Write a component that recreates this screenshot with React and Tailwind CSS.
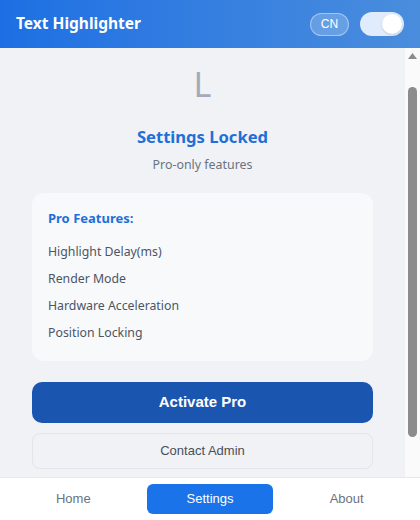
import React from "react";

export default function App() {
  const items = ["Highlight Delay(ms)", "Render Mode", "Hardware Acceleration", "Position Locking"];
  return (
    <div className="relative flex h-[520px] w-[420px] flex-col overflow-hidden bg-[#f0f2f6]" style={{ fontFamily: '"Noto Sans", "Open Sans", sans-serif' }}>
      <header className="flex h-12 shrink-0 items-center justify-between bg-gradient-to-r from-[#1c6fe3] to-[#4a8ddd] pl-4 pr-4">
        <h1 className="text-[15.5px] font-bold text-white">Text Highlighter</h1>
        <div className="flex items-center gap-[11px]">
          <span className="flex h-[23px] w-[39px] items-center justify-center rounded-full border border-white/40 bg-white/20 text-[12px] text-white" style={{ fontFamily: '"Liberation Sans", Arial, sans-serif' }}>CN</span>
          <span className="flex h-[24px] w-[44px] items-center justify-end rounded-full bg-[#e0ebfb] pr-[2px]">
            <span className="h-[20px] w-[20px] rounded-full bg-white shadow-sm"></span>
          </span>
        </div>
      </header>
      <main className="flex-1 overflow-hidden">
        <div className="mr-[15px] flex flex-col px-8 pb-[143px] pt-[16px]">
          <div className="text-center text-[34px] leading-[40px] text-[#a3abbb]">L</div>
          <h2 className="mt-[21px] text-center text-[16.6px] font-bold leading-[24px] text-[#1f6fd9]">Settings Locked</h2>
          <p className="mt-[6px] text-center text-[12.4px] leading-[20px] text-[#6b7280]">Pro-only features</p>
          <div className="mt-[18px] rounded-xl bg-[#f8f9fb] px-4 pb-[18px] pt-[15px]">
            <div className="text-[13px] font-bold leading-[20px] text-[#1f6fd9]">Pro Features:</div>
            <ul className="mt-[14px] flex flex-col gap-[7px]">
              {items.map((t) => (
                <li key={t} className="text-[12.3px] leading-[20px] text-[#4b5563]">{t}</li>
              ))}
            </ul>
          </div>
          <button className="mt-[21px] h-[41px] rounded-[10px] bg-[#1a56b0] text-[15px] font-bold text-white" style={{ fontFamily: '"Liberation Sans", Arial, sans-serif' }}>Activate Pro</button>
          <button className="mt-[10px] h-[36px] rounded-[8px] border border-[#e2e5ea] bg-[#f0f2f6] text-[13px] text-[#4a4f57]" style={{ fontFamily: '"Liberation Sans", Arial, sans-serif' }}>Contact Admin</button>
        </div>
      </main>
      <div className="absolute bottom-0 right-0 top-12 flex w-[15px] flex-col items-center bg-[#fafafa]">
        <svg width="9" height="6" viewBox="0 0 9 6" className="mt-[5px]">
          <path d="M4.5 0 L9 6 L0 6 Z" fill="#8c8c8c" />
        </svg>
        <div className="mt-[28px] h-[350px] w-[9px] rounded-full bg-[#8c8c8c]"></div>
      </div>
      <nav className="absolute bottom-0 left-0 right-0 flex h-[43px] items-center border-t border-[#e5e7eb] bg-white px-[5px]" style={{ fontFamily: '"Liberation Sans", Arial, sans-serif' }}>
        <button className="mx-[5px] h-[30px] flex-1 rounded-md text-[13px] text-[#6b7280]">Home</button>
        <button className="mx-[5px] h-[30px] flex-1 rounded-md bg-[#1a73e8] text-[13px] text-white">Settings</button>
        <button className="mx-[5px] h-[30px] flex-1 rounded-md text-[13px] text-[#6b7280]">About</button>
      </nav>
    </div>
  );
}
